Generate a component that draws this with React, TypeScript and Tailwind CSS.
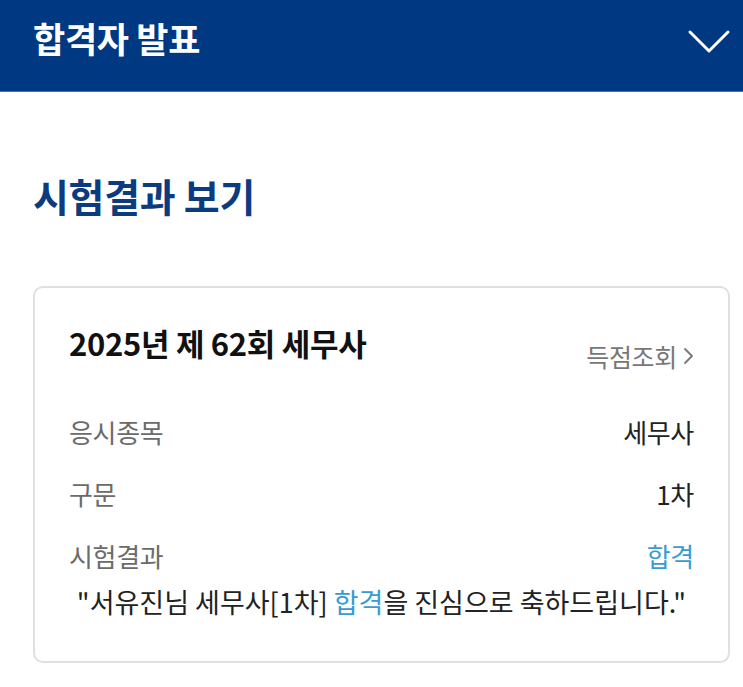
import React from "react";

const font = { fontFamily: '"Noto Sans CJK KR", "Noto Sans", sans-serif' };

function Row({ label, value, accent }: { label: string; value: string; accent?: boolean }) {
  return (
    <div className="flex items-center justify-between h-[62px]">
      <span className="text-[26px] leading-[30px] text-[#6b6b6b] tracking-[-0.3px]">{label}</span>
      <span className={`text-[26px] leading-[30px] tracking-[-0.3px] ${accent ? "text-[#3a9ad6]" : "text-[#222]"}`}>{value}</span>
    </div>
  );
}

export default function App() {
  return (
    <div className="w-[743px] h-[687px] bg-white overflow-hidden" style={font}>
      <header className="h-[92px] bg-[#003882] flex items-start justify-between pl-[33px] pr-[12px] border-b border-[#4a6fa8]">
        <h1 className="mt-[19px] text-[35px] font-bold text-white leading-[37px] tracking-[-0.3px]">합격자 발표</h1>
        <svg width="44" height="28" viewBox="0 0 44 28" className="mt-[28px]">
          <path d="M3 4 L22 23 L41 4" fill="none" stroke="#fff" strokeWidth="3" strokeLinecap="round" strokeLinejoin="round" />
        </svg>
      </header>
      <main className="pl-[33px] pr-[13px]">
        <h2 className="mt-[81px] text-[39px] font-bold text-[#0c3c80] leading-[44px] tracking-[-0.3px]">시험결과 보기</h2>
        <section className="mt-[69px] h-[377px] border-2 border-[#e0e0e0] rounded-[10px] px-[34px] pt-[37px]">
          <div className="flex items-start justify-between">
            <h3 className="text-[31px] font-bold text-[#111] leading-[36px] tracking-[-0.3px]">2025년 제 62회 세무사</h3>
            <div className="flex items-center gap-[6px] mt-[16px] text-[#777]">
              <span className="text-[25px] leading-[30px] tracking-[-0.3px]">득점조회</span>
              <svg width="11" height="18" viewBox="0 0 11 18">
                <path d="M2 2 L9 9 L2 16" fill="none" stroke="#777" strokeWidth="1.8" strokeLinecap="round" strokeLinejoin="round" />
              </svg>
            </div>
          </div>
          <div className="mt-[30px]">
            <Row label="응시종목" value="세무사" />
            <Row label="구문" value="1차" />
            <Row label="시험결과" value="합격" accent />
          </div>
          <p className="text-center text-[27px] leading-[30px] text-[#222]">
            "서유진님 세무사[1차] <span className="text-[#3a9ad6]">합격</span>을 진심으로 축하드립니다."
          </p>
        </section>
      </main>
    </div>
  );
}
